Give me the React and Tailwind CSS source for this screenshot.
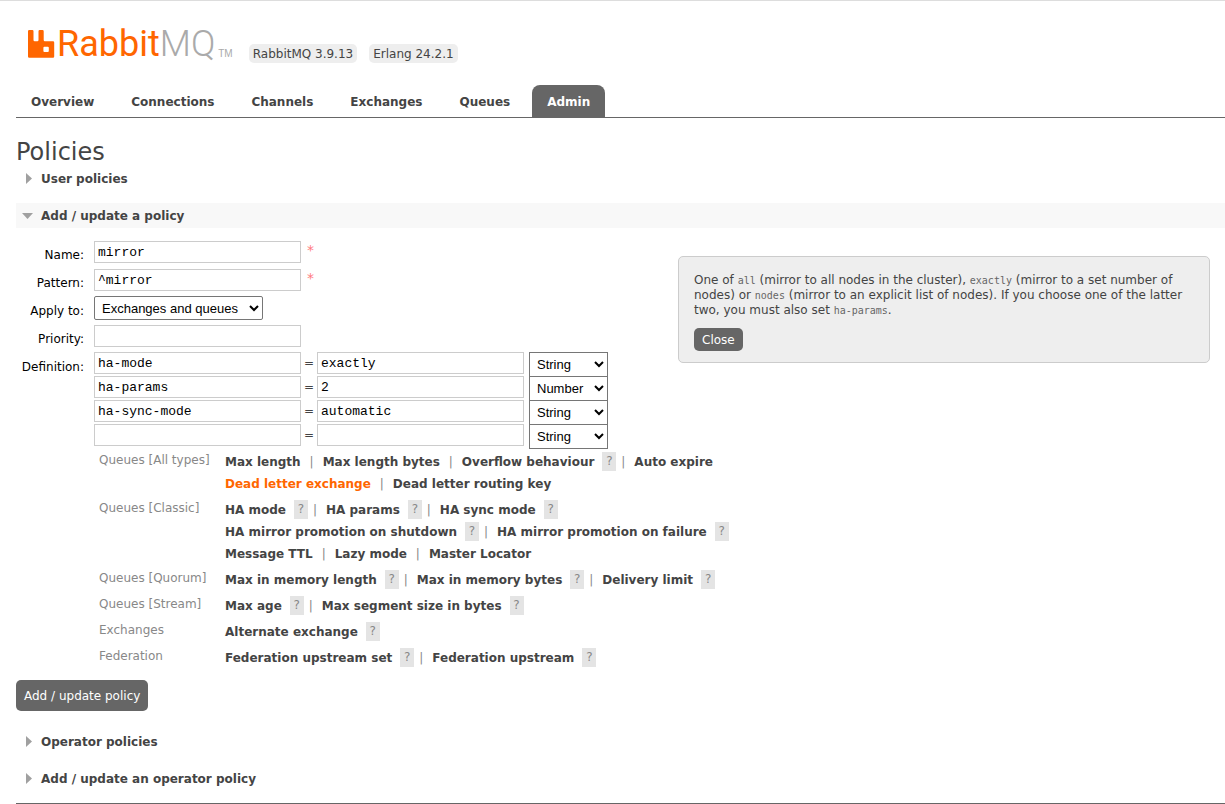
const TABS = ["Overview", "Connections", "Channels", "Exchanges", "Queues", "Admin"];

const DEFINITIONS = [
  { key: "ha-mode", value: "exactly", type: "String" },
  { key: "ha-params", value: "2", type: "Number" },
  { key: "ha-sync-mode", value: "automatic", type: "String" },
  { key: "", value: "", type: "String" },
];

const HINTS = [
  {
    label: "Queues [All types]",
    lines: [
      [["Max length"], ["Max length bytes"], ["Overflow behaviour", true], ["Auto expire"]],
      [["Dead letter exchange", false, true], ["Dead letter routing key"]],
    ],
  },
  {
    label: "Queues [Classic]",
    lines: [
      [["HA mode", true], ["HA params", true], ["HA sync mode", true]],
      [["HA mirror promotion on shutdown", true], ["HA mirror promotion on failure", true]],
      [["Message TTL"], ["Lazy mode"], ["Master Locator"]],
    ],
  },
  {
    label: "Queues [Quorum]",
    lines: [[["Max in memory length", true], ["Max in memory bytes", true], ["Delivery limit", true]]],
  },
  { label: "Queues [Stream]", lines: [[["Max age", true], ["Max segment size in bytes", true]]] },
  { label: "Exchanges", lines: [[["Alternate exchange", true]]] },
  { label: "Federation", lines: [[["Federation upstream set", true], ["Federation upstream", true]]] },
];

const INPUT =
  "h-[22px] w-[207px] border border-[#ccc] bg-white px-[3px] font-['Liberation_Mono',monospace] text-[13px] text-black outline-none";
const SELECT =
  "border border-[#767676] bg-white font-['Liberation_Sans',sans-serif] text-[13px] text-black outline-none";

function Logo() {
  return (
    <a href="#/" aria-label="RabbitMQ" className="flex items-end leading-none">
      <svg width="27" height="28" viewBox="0 0 27 28" className="mb-[5px]" aria-hidden="true">
        <path
          fill="#ff6600"
          fillRule="evenodd"
          d="M1.2 0H4.3Q5.5 0 5.5 1.2V10Q5.5 11.2 6.7 11.2H9.3Q10.5 11.2 10.5 10V1.2Q10.5 0 11.7 0H14.5Q15.7 0 15.7 1.2V10Q15.7 11.2 16.9 11.2H25Q26.2 11.2 26.2 12.4V26.6Q26.2 27.8 25 27.8H1.2Q0 27.8 0 26.6V1.2Q0 0 1.2 0ZM16.4 16.8Q15.4 16.8 15.4 17.8V21Q15.4 22 16.4 22H19.8Q20.8 22 20.8 21V17.8Q20.8 16.8 19.8 16.8Z"
        />
      </svg>
      <span className="ml-[2px] font-['Roboto',sans-serif] text-[36px] leading-[38px]">
        <span className="text-[#ff6600]">Rabbit</span>
        <span className="font-light text-[#aaa]">MQ</span>
      </span>
      <span className="mb-1 ml-[3px] font-['Liberation_Sans',sans-serif] text-[10px] leading-none text-[#aaa]">TM</span>
    </a>
  );
}

function Section({ title, open = false }) {
  return (
    <h2 className={open ? "bg-[#f8f8f8]" : ""}>
      <button type="button" aria-expanded={open} className="flex h-[25px] w-full items-center pl-[6px] font-bold">
        <svg width="11" height="12" viewBox="0 0 11 12" className="mr-2" aria-hidden="true">
          {open ? <path d="M0 3H11L5.5 9Z" fill="#a0a0a0" /> : <path d="M4 0L10 5.5L4 11Z" fill="#a0a0a0" />}
        </svg>
        <span className="pt-px">{title}</span>
      </button>
    </h2>
  );
}

function Field({ id, label, children }) {
  return (
    <>
      <label htmlFor={id} className="pt-[7px] text-right text-black">
        {label}
      </label>
      <div className="flex items-start">{children}</div>
    </>
  );
}

function HintLine({ items }) {
  return (
    <div className="flex h-[22px] items-center whitespace-nowrap">
      {items.map(([text, help, active], i) => (
        <span key={text} className="flex items-center">
          {i > 0 && <span className="w-[22px] pt-[2px] text-center text-[#888]">|</span>}
          <button type="button" className={active ? "pt-[2px] font-bold text-[#ff6600]" : "pt-[2px] font-bold"}>
            {text}
          </button>
          {help && (
            <button
              type="button"
              aria-label={"Help: " + text}
              className="-mr-1 ml-2 h-[19px] w-[14px] bg-[#e4e4e4] text-center text-[#888]"
            >
              ?
            </button>
          )}
        </span>
      ))}
    </div>
  );
}

export default function App() {
  return (
    <div className="border-t border-[#ddd] bg-white pl-4 font-['DejaVu_Sans',Verdana,sans-serif] text-[12px] leading-[15px] text-[#444]">
      <header className="flex items-end pt-6 pl-3">
        <Logo />
        <span className="ml-4 rounded-[5px] bg-[#eee] px-1 pt-[3px] pb-px">RabbitMQ 3.9.13</span>
        <span className="ml-3 rounded-[5px] bg-[#eee] px-1 pt-[3px] pb-px">Erlang 24.2.1</span>
      </header>
      <nav className="mt-[22px] flex gap-[7px] border-b border-[#666] font-bold">
        {TABS.map((t) => (
          <a
            key={t}
            href={"#/" + t.toLowerCase()}
            className={
              t === "Admin"
                ? "flex h-8 items-center rounded-t-lg bg-[#666] px-[15px] pt-[2px] text-white"
                : "flex h-8 items-center px-[15px] pt-[2px]"
            }
          >
            {t}
          </a>
        ))}
      </nav>

      <main className="relative pt-[21px]">
        <h1 className="text-[24px] leading-[27px]">Policies</h1>
        <Section title="User policies" />
        <div className="h-3" />
        <Section title="Add / update a policy" open />

        <form className="pt-[13px]" onSubmit={(e) => e.preventDefault()}>
          <div className="grid grid-cols-[68px_auto] gap-x-[10px] gap-y-[6px]">
            <Field id="name" label="Name:">
              <input id="name" className={INPUT} defaultValue="mirror" />
              <span className="ml-[6px] pt-[2px] text-[14px] text-[#ff7a80]">*</span>
            </Field>
            <Field id="pattern" label="Pattern:">
              <input id="pattern" className={INPUT} defaultValue="^mirror" />
              <span className="ml-[6px] pt-[2px] text-[14px] text-[#ff7a80]">*</span>
            </Field>
            <Field id="apply" label="Apply to:">
              <select id="apply" className={SELECT + " -my-px h-6 w-[169px] rounded-[2px] pl-[3px]"}>
                <option>Exchanges and queues</option>
              </select>
            </Field>
            <Field id="priority" label="Priority:">
              <input id="priority" className={INPUT} />
            </Field>
            <Field id="definition" label="Definition:">
              <div className="-mt-px">
                {DEFINITIONS.map((d, i) => (
                  <div key={i} className="flex h-6 items-start">
                    <input
                      id={i === 0 ? "definition" : undefined}
                      aria-label={i === 0 ? undefined : "Definition key"}
                      className={INPUT}
                      defaultValue={d.key}
                    />
                    <span className="w-4 pt-1 text-center">=</span>
                    <input aria-label="Definition value" className={INPUT} defaultValue={d.value} />
                    <select
                      aria-label="Definition type"
                      defaultValue={d.type}
                      className={SELECT + " ml-[5px] h-[25px] w-[79px] pl-[3px]"}
                    >
                      <option>String</option>
                      <option>Number</option>
                    </select>
                  </div>
                ))}
                <div className="mt-[2px] grid grid-cols-[126px_auto] gap-y-1 pl-[5px]">
                  {HINTS.map((h) => (
                    <div key={h.label} className="contents">
                      <span className="pt-[3px] text-[#888]">{h.label}</span>
                      <div>
                        {h.lines.map((items, i) => (
                          <HintLine key={i} items={items} />
                        ))}
                      </div>
                    </div>
                  ))}
                </div>
              </div>
            </Field>
          </div>
          <button type="submit" className="mt-3 mb-[18px] h-[31px] rounded-[5px] bg-[#666] px-2 pt-px text-white">
            Add / update policy
          </button>
        </form>

        <Section title="Operator policies" />
        <div className="h-3" />
        <Section title="Add / update an operator policy" />

        <div
          role="dialog"
          aria-label="Help"
          className="absolute top-[138px] right-[15px] w-[532px] rounded-[5px] border border-[#ccc] bg-[#eee] px-[15px] pt-4 pb-[11px]"
        >
          <p>
            One of <Code>all</Code> (mirror to all nodes in the cluster), <Code>exactly</Code> (mirror to a set number of
            nodes) or <Code>nodes</Code> (mirror to an explicit list of nodes). If you choose one of the latter two, you
            must also set <Code>ha-params</Code>.
          </p>
          <button type="button" className="mt-[10px] h-[23px] rounded-[5px] bg-[#666] px-2 pt-px text-white">
            Close
          </button>
        </div>
      </main>
      <footer className="mt-3 border-t border-[#666]" />
    </div>
  );
}

function Code({ children }) {
  return <code className="font-['DejaVu_Sans_Mono',monospace] text-[10px] text-[#666]">{children}</code>;
}
